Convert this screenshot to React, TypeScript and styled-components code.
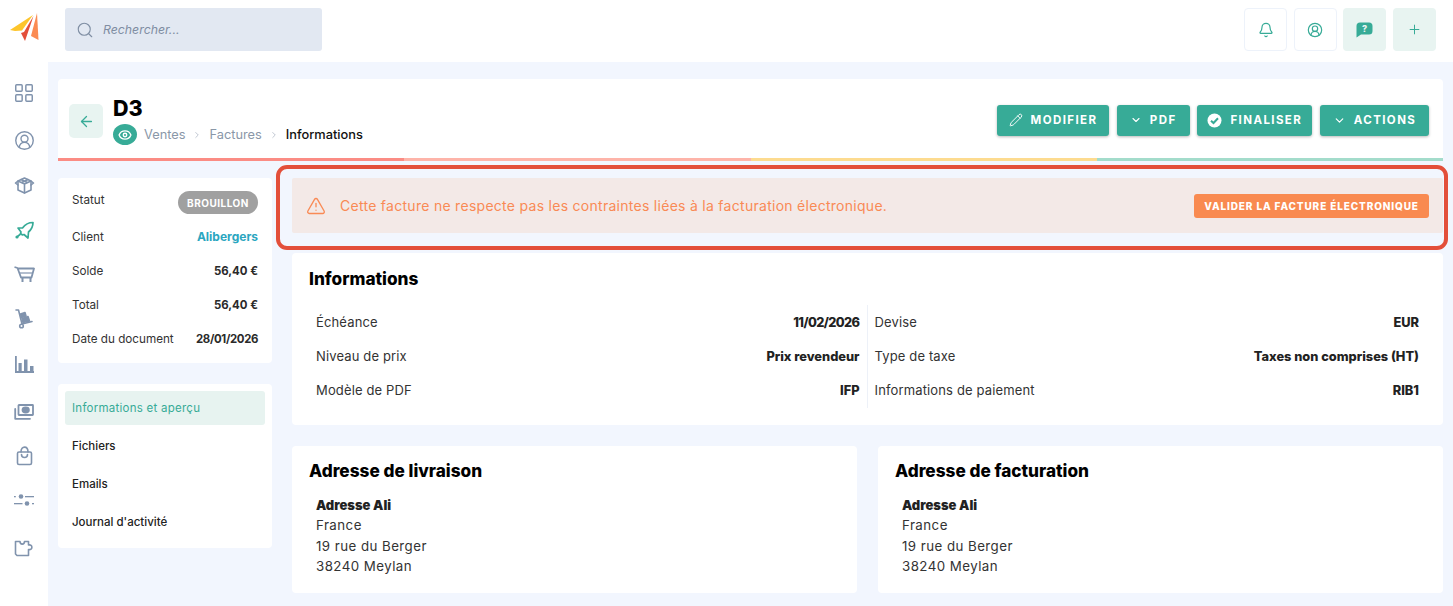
import React from "react";
import styled, { createGlobalStyle } from "styled-components";
import { ArrowLeft, Bell, ChevronDown, ChevronRight, CircleUserRound, Eye, LayoutGrid, Pencil, Plus, Search, TriangleAlert } from "lucide-react";

const Global = createGlobalStyle`
  html, body { margin: 0; padding: 0; background: #fff; }
  body { font-family: Inter, "Liberation Sans", sans-serif; color: #222; }
  * { box-sizing: border-box; }
`;

const Page = styled.div`display: grid; grid-template-columns: 48px 1fr; width: 1453px; height: 606px; overflow: hidden;`;
const Sidebar = styled.aside`display: flex; flex-direction: column; align-items: center; padding-top: 13px; color: #8093ad;`;
const LogoBox = styled.div`height: 57px; display: flex; align-items: flex-start; justify-content: center; width: 100%; padding-left: 1px;`;
const NavIcon = styled.div<{ $gap: number; $active?: boolean }>`
  height: 24px; margin-top: ${p => p.$gap}px; flex: none; display: flex; align-items: center; justify-content: center; width: 100%;
  color: ${p => (p.$active ? "#37ab97" : "#8093ad")};
`;
const Column = styled.div`display: flex; flex-direction: column; min-width: 0;`;
const TopBar = styled.header`height: 62px; margin-left: -48px; padding: 8px 17px 0 65px; display: flex; justify-content: space-between; align-items: flex-start; pointer-events: none;`;
const SearchBox = styled.div`width: 257px; height: 43px; background: #e2e8f2; border-radius: 3px; display: flex; align-items: center; gap: 9px; padding-left: 11px; color: #7f8ea3;`;
const SearchText = styled.span`font-size: 12.3px; font-style: italic; font-weight: 400; color: #7f8da2;`;
const TopActions = styled.div`display: flex; gap: 6.67px;`;
const TopButton = styled.div<{ $soft?: boolean }>`
  width: 43px; height: 43px; border-radius: 4px; display: flex; align-items: center; justify-content: center; color: #37ab97;
  background: ${p => (p.$soft ? "#e8f4f1" : "#fff")};
  border: ${p => (p.$soft ? "none" : "1.5px solid #edf2fa")};
`;
const Main = styled.main`flex: 1; background: #f2f6fe; padding: 17px 10px 0; display: flex; flex-direction: column; gap: 17px;`;
const HeaderCard = styled.section`height: 82px; background: #fff; border-radius: 4px 4px 0 0; display: flex; flex-direction: column; overflow: hidden;`;
const HeaderBody = styled.div`flex: 1; display: flex; align-items: center; justify-content: space-between; padding: 3px 14px 0 11px;`;
const HeaderLeft = styled.div`display: flex; align-items: center; gap: 10px; padding-top: 2px;`;
const BackButton = styled.div`width: 34px; height: 34px; border-radius: 5px; background: #e8f4f1; color: #37ab97; display: flex; align-items: center; justify-content: center;`;
const TitleBlock = styled.div`display: flex; flex-direction: column; gap: 2px; margin-top: -3px;`;
const Title = styled.h1`margin: 0; font-size: 21.5px; line-height: 28px; font-weight: 800; color: #000;`;
const Crumbs = styled.div`display: flex; align-items: center; font-size: 12.8px; color: #8a97a8; height: 22px;`;
const EyePill = styled.div`width: 24px; height: 21px; border-radius: 50%; background: #37ab97; color: #fff; display: flex; align-items: center; justify-content: center; margin-right: 7px;`;
const Crumb = styled.span<{ $current?: boolean }>`color: ${p => (p.$current ? "#111" : "#8a97a8")}; font-weight: ${p => (p.$current ? 500 : 400)};`;
const CrumbSep = styled.span`display: flex; color: #b4bdc9; margin: 0 7px;`;
const Buttons = styled.div`display: flex; gap: 7.67px;`;
const Button = styled.div<{ $w: number }>`
  width: ${p => p.$w}px; height: 31px; background: #37ab97; border-radius: 3px; color: #fff; display: flex; align-items: center; justify-content: center; gap: 8px;
  font-size: 11.5px; font-weight: 700; letter-spacing: 1.4px; box-shadow: 0 1px 3px rgba(0,0,0,.28);
`;
const Stripes = styled.div`display: grid; grid-template-columns: repeat(4, 1fr); height: 3px; flex: none;`;
const Stripe = styled.div<{ $c: string }>`background: ${p => p.$c};`;
const Content = styled.div`display: grid; grid-template-columns: 214px 1fr; gap: 20px;`;
const LeftCol = styled.div`display: flex; flex-direction: column; gap: 21px;`;
const Card = styled.section`background: #fff; border-radius: 4px;`;
const StatusCard = styled(Card)`height: 185px; padding: 13px 14px 0; display: flex; flex-direction: column;`;
const StatusHead = styled.div`height: 28px; display: flex; align-items: flex-start; justify-content: space-between; font-size: 11.7px; line-height: 18px; color: #333; flex: none;`;
const StatusRow = styled.div<{ $h: number }>`height: ${p => p.$h}px; display: flex; align-items: center; justify-content: space-between; font-size: 11.7px; color: #333; flex: none;`;
const StatusValue = styled.span<{ $link?: boolean; $tight?: boolean }>`
  font-weight: 700; font-size: ${p => (p.$link ? 12 : 11.4)}px; color: ${p => (p.$link ? "#2ba6c0" : "#2a2a2a")};
  letter-spacing: ${p => (p.$tight ? "-.35px" : "0")};
`;
const Pill = styled.span`width: 80px; height: 23px; border-radius: 12px; background: #a0a0a0; color: #fff; display: flex; align-items: center; justify-content: center; font-size: 10px; font-weight: 700; letter-spacing: .5px;`;
const NavCard = styled(Card)`height: 164px; padding: 7px; display: flex; flex-direction: column; gap: 4px;`;
const NavItem = styled.div<{ $active?: boolean }>`
  height: 34px; border-radius: 3px; padding-left: 7px; display: flex; align-items: center; font-size: 11.5px;
  font-weight: ${p => (p.$active ? 400 : 500)}; letter-spacing: ${p => (p.$active ? ".25px" : "0")};
  background: ${p => (p.$active ? "#e7f3f0" : "transparent")}; color: ${p => (p.$active ? "#37ab97" : "#222")};
`;
const RightCol = styled.div`display: flex; flex-direction: column;`;
const Alert = styled.div`position: relative; height: 55px; background: #f3e9e7; border-radius: 2px; display: flex; align-items: center; justify-content: space-between; padding: 0 14px; color: #f98a55; margin-bottom: 20px;`;
const AlertLeft = styled.div`display: flex; align-items: center; gap: 14px; font-size: 14px; letter-spacing: .28px;`;
const AlertAction = styled.div`width: 235px; height: 24px; background: #f98a50; border-radius: 3px; color: #fff; font-size: 10px; font-weight: 800; letter-spacing: .88px; display: flex; align-items: center; justify-content: center; white-space: nowrap;`;
const Highlight = styled.div`position: absolute; left: -16px; right: -5px; top: -13px; bottom: -17px; border: 4px solid #e34f3a; border-radius: 11px; pointer-events: none;`;
const InfoCard = styled(Card)`height: 172px; padding: 14px 17px 0; margin-bottom: 21px;`;
const SectionTitle = styled.h2`margin: 0; font-size: 17.2px; line-height: 24px; font-weight: 800; color: #000;`;
const InfoGrid = styled.div`display: grid; grid-template-columns: 1fr 1fr; margin-top: 14px; padding: 0 7px;`;
const InfoColumn = styled.div<{ $divided?: boolean }>`
  display: flex; flex-direction: column;
  ${p => p.$divided ? "border-right: 1px solid #edf1f8; padding-right: 7px;" : "padding-left: 7px;"}
`;
const InfoRow = styled.div`height: 34.2px; display: flex; align-items: center; justify-content: space-between; font-size: 13px; letter-spacing: .14px; color: #333;`;
const InfoValue = styled.span<{ $tight?: boolean }>`font-weight: 800; color: #222; font-size: 12.8px; letter-spacing: ${p => (p.$tight ? "-.6px" : "0")};`;
const AddressGrid = styled.div`display: grid; grid-template-columns: 1fr 1fr; gap: 21px;`;
const AddressCard = styled(Card)`height: 147px; padding: 13px 17px 0;`;
const AddressBody = styled.div`margin-top: 12px; padding-left: 7px; font-size: 13.3px; line-height: 20.4px; color: #333; letter-spacing: .45px;`;
const AddressName = styled.div`font-weight: 900; font-size: 13px; letter-spacing: 0; color: #222;`;

const Logo = () => (
  <svg width="29" height="28" viewBox="0 0 29 28">
    <path d="M0 17 L23 2 L12 17.500 L5 18 Z" fill="#fdc52c" />
    <path d="M23.500 3 L15 28 L11 20 L14 19 Z" fill="#e34f3a" />
    <path d="M27 0 L28.500 27 L21 23 Z" fill="#fb8b52" />
  </svg>
);
const s = { fill: "none", stroke: "currentColor", strokeWidth: 1.6, strokeLinecap: "round" as const, strokeLinejoin: "round" as const };
const GridIcon = () => <LayoutGrid size={22} strokeWidth={1.6} />;
const UserIcon = () => <CircleUserRound size={21} strokeWidth={1.6} />;
const BoxIcon = () => (
  <svg width="21" height="20" viewBox="0 0 21 20" {...s}>
    <path d="M4 6 L10.5 3 L17 6 V15 L10.5 18 L4 15 Z" />
    <path d="M1.500 8 L4 6 L10.500 9 L17 6 L19.500 8 L17 10 M4 6 L1.500 8 L4 10 M10.500 9 V18 M7 4.500 L13.500 7.500 M14 4.500 L7.500 7.500" />
  </svg>
);
const RocketIcon = () => (
  <svg width="20" height="19" viewBox="0 0 20 19" {...s} strokeWidth={1.7}>
    <path d="M19 1.500 C15 1.500 11 3.500 8.500 7 L4 7 L7 11 L6.500 12.500 L8.500 14 L10 13.500 L14 17 L14.500 11 C17.500 8.500 19 5.500 19 1.500 Z" />
    <circle cx="3" cy="16" r="1.600" fill="currentColor" stroke="none" />
    <path d="M3.500 15.500 L6 13.500" />
  </svg>
);
const CartIcon = () => (
  <svg width="21" height="17" viewBox="0 0 21 17" fill="none" stroke="currentColor" strokeWidth="1.8" strokeLinejoin="round">
    <path d="M.5 1 L3.500 2 L7 11.500 H17.500 L20 2.500 H4" />
    <path d="M5.500 7 H18.500" strokeWidth="1.200" />
    <path d="M8.500 11.500 V16 M16.500 11.500 V16" strokeWidth="2" />
  </svg>
);
const TrolleyIcon = () => (
  <svg width="20" height="22" viewBox="0 0 20 22" {...s}>
    <path d="M2 3 L4.500 3 L8 17 L18 14.500" />
    <circle cx="7.500" cy="19" r="1.800" />
    <path d="M6.500 7 L11 5.500 L12 9 L7.500 10.500 Z" fill="currentColor" />
    <path d="M8 11.500 L14 9.500 L15.500 14 L9 15.500 Z" fill="currentColor" />
  </svg>
);
const ChartIcon = () => (
  <svg width="19" height="17" viewBox="0 0 19 17" fill="currentColor">
    <path d="M0 0 H1.800 V15 H19 V17 H0 Z" />
    <rect x="3.500" y="7" width="3.200" height="8" />
    <rect x="9" y="3.500" width="3.500" height="11.500" />
    <rect x="15" y="10" width="3.500" height="5" />
  </svg>
);
const MoneyIcon = () => (
  <svg width="20" height="16" viewBox="0 0 20 16" {...s} strokeWidth={1.8}>
    <rect x="4.500" y="1" width="14.500" height="10" rx=".5" />
    <ellipse cx="11.700" cy="6" rx="3.200" ry="2.500" fill="currentColor" />
    <path d="M1.200 5 V14.800 H16" />
  </svg>
);
const BagIcon = () => (
  <svg width="17" height="20" viewBox="0 0 17 20" {...s}>
    <rect x="1.500" y="6" width="14" height="12.500" rx="1.500" />
    <path d="M5 6 C5 -.5 12 -.5 12 6 M5.500 8.500 C5.500 12.500 11.500 12.500 11.500 8.500" />
  </svg>
);
const SliderIcon = () => (
  <svg width="20" height="14" viewBox="0 0 20 14" fill="currentColor">
    <circle cx="7" cy="3.500" r="2.300" />
    <circle cx="13" cy="10.500" r="2.300" />
    <rect x="0" y="3" width="1.800" height="1.300" />
    <rect x="11" y="3" width="9" height="1.300" />
    <rect x="0" y="10" width="8.500" height="1.300" />
    <rect x="18" y="10" width="2" height="1.300" />
  </svg>
);
const PuzzleIcon = () => (
  <svg width="20" height="17" viewBox="0 0 20 17" {...s}>
    <path d="M1.500 1.500 H6 C6 5 10.500 5 10.500 1.500 H14.500 V5 C19 4 19 10.500 14.500 9.500 V15.500 H3 L1.500 14 Z" />
  </svg>
);
const CheckBadge = () => (
  <svg width="15" height="15" viewBox="0 0 15 15">
    <circle cx="7.500" cy="7.500" r="7" fill="#fff" />
    <path d="M4 7.700 L6.500 10 L11 5.300" fill="none" stroke="#37ab97" strokeWidth="2" />
  </svg>
);
const HelpBubble = () => (
  <svg width="17" height="16" viewBox="0 0 17 16" style={{ fontFamily: "Inter" }}>
    <path d="M4 .5 H13 A3.500 3.500 0 0 1 16.500 4 V9 A3.500 3.500 0 0 1 13 12.500 H5 L.5 15.500 V4 A3.500 3.500 0 0 1 4 .5 Z" fill="#37ab97" />
    <text x="8.500" y="10" textAnchor="middle" fontSize="9" fontWeight="800" fill="#e8f4f1">?</text>
  </svg>
);

const navIcons: { gap: number; el: React.ReactNode; active?: boolean }[] = [
  { gap: 11, el: <GridIcon /> },
  { gap: 23, el: <UserIcon /> },
  { gap: 21, el: <BoxIcon /> },
  { gap: 21, el: <RocketIcon />, active: true },
  { gap: 20, el: <CartIcon /> },
  { gap: 20, el: <TrolleyIcon /> },
  { gap: 22, el: <ChartIcon /> },
  { gap: 24, el: <MoneyIcon /> },
  { gap: 20, el: <BagIcon /> },
  { gap: 20, el: <SliderIcon /> },
  { gap: 24, el: <PuzzleIcon /> },
];

const statusRows = [
  { l: "Client", v: "Alibergers", h: 35, link: true },
  { l: "Solde", v: "56,40 €", h: 33 },
  { l: "Total", v: "56,40 €", h: 35 },
  { l: "Date du document", v: "28/01/2026", h: 34, tight: true },
];
const infoLeft = [["Échéance", "11/02/2026"], ["Niveau de prix", "Prix revendeur"], ["Modèle de PDF", "IFP"]];
const infoRight = [["Devise", "EUR"], ["Type de taxe", "Taxes non comprises (HT)"], ["Informations de paiement", "RIB1"]];
const address = ["France", "19 rue du Berger", "38240 Meylan"];

export default function App() {
  return (
    <Page>
      <Global />
      <Sidebar>
        <LogoBox><Logo /></LogoBox>
        {navIcons.map((n, i) => <NavIcon key={i} $gap={n.gap} $active={n.active}>{n.el}</NavIcon>)}
      </Sidebar>
      <Column>
        <TopBar>
          <SearchBox>
            <Search size={18} strokeWidth={1.5} />
            <SearchText>Rechercher...</SearchText>
          </SearchBox>
          <TopActions>
            <TopButton><Bell size={16} strokeWidth={1.8} /></TopButton>
            <TopButton><CircleUserRound size={16} strokeWidth={1.8} /></TopButton>
            <TopButton $soft><HelpBubble /></TopButton>
            <TopButton $soft><Plus size={15} strokeWidth={1.6} /></TopButton>
          </TopActions>
        </TopBar>
        <Main>
          <HeaderCard>
            <HeaderBody>
              <HeaderLeft>
                <BackButton><ArrowLeft size={17} strokeWidth={1.8} /></BackButton>
                <TitleBlock>
                  <Title>D3</Title>
                  <Crumbs>
                    <EyePill><Eye size={14} strokeWidth={2.4} /></EyePill>
                    <Crumb>Ventes</Crumb>
                    <CrumbSep><ChevronRight size={10} /></CrumbSep>
                    <Crumb>Factures</Crumb>
                    <CrumbSep><ChevronRight size={10} /></CrumbSep>
                    <Crumb $current>Informations</Crumb>
                  </Crumbs>
                </TitleBlock>
              </HeaderLeft>
              <Buttons>
                <Button $w={112}><Pencil size={14} strokeWidth={1.6} />MODIFIER</Button>
                <Button $w={73}><ChevronDown size={12} strokeWidth={2.2} />PDF</Button>
                <Button $w={115}><CheckBadge />FINALISER</Button>
                <Button $w={109}><ChevronDown size={13} strokeWidth={2.2} />ACTIONS</Button>
              </Buttons>
            </HeaderBody>
            <Stripes>
              <Stripe $c="#fb8c84" /><Stripe $c="#feb4a9" /><Stripe $c="#fddb8f" /><Stripe $c="#a3dccb" />
            </Stripes>
          </HeaderCard>
          <Content>
            <LeftCol>
              <StatusCard>
                <StatusHead>Statut<Pill>BROUILLON</Pill></StatusHead>
                {statusRows.map(r => (
                  <StatusRow key={r.l} $h={r.h}>{r.l}<StatusValue $link={r.link} $tight={r.tight}>{r.v}</StatusValue></StatusRow>
                ))}
              </StatusCard>
              <NavCard>
                <NavItem $active>Informations et aperçu</NavItem>
                <NavItem>Fichiers</NavItem>
                <NavItem>Emails</NavItem>
                <NavItem>Journal d'activité</NavItem>
              </NavCard>
            </LeftCol>
            <RightCol>
              <Alert>
                <AlertLeft>
                  <TriangleAlert size={20} strokeWidth={1.6} />
                  Cette facture ne respecte pas les contraintes liées à la facturation électronique.
                </AlertLeft>
                <AlertAction>VALIDER LA FACTURE ÉLECTRONIQUE</AlertAction>
                <Highlight />
              </Alert>
              <InfoCard>
                <SectionTitle>Informations</SectionTitle>
                <InfoGrid>
                  <InfoColumn $divided>
                    {infoLeft.map(([l, v]) => <InfoRow key={l}>{l}<InfoValue $tight={/\d/.test(v)}>{v}</InfoValue></InfoRow>)}
                  </InfoColumn>
                  <InfoColumn>
                    {infoRight.map(([l, v]) => <InfoRow key={l}>{l}<InfoValue>{v}</InfoValue></InfoRow>)}
                  </InfoColumn>
                </InfoGrid>
              </InfoCard>
              <AddressGrid>
                {["Adresse de livraison", "Adresse de facturation"].map(t => (
                  <AddressCard key={t}>
                    <SectionTitle>{t}</SectionTitle>
                    <AddressBody>
                      <AddressName>Adresse Ali</AddressName>
                      {address.map(a => <div key={a}>{a}</div>)}
                    </AddressBody>
                  </AddressCard>
                ))}
              </AddressGrid>
            </RightCol>
          </Content>
        </Main>
      </Column>
    </Page>
  );
}
